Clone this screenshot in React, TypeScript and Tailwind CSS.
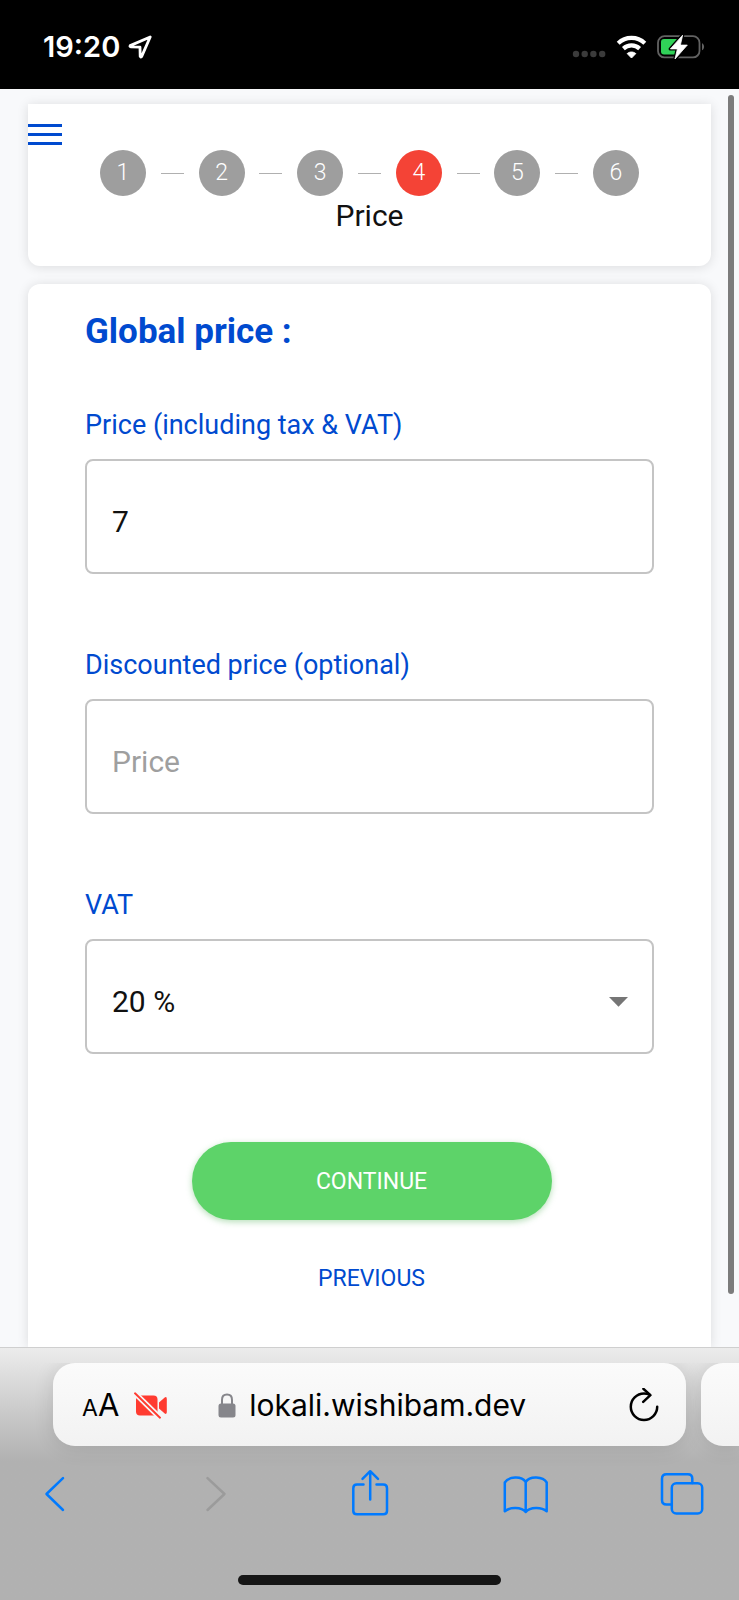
import { Fragment, useState, type ReactNode } from "react";

const STEPS = [1, 2, 3, 4, 5, 6];
const CURRENT_STEP = 4;
const VAT_RATES = ["20 %", "10 %", "5.5 %", "2.1 %"];

const fieldClass =
  "block h-[115px] w-full appearance-none rounded-lg border-2 border-[#c4c4c4] bg-transparent px-[25px] pt-[10px] text-[30px] text-[#111] outline-none placeholder:text-[#9f9f9f] placeholder:opacity-100";

function StatusBar() {
  return (
    <header className="flex h-[89px] items-center justify-between bg-black pr-[33px] pl-[43px] pt-[5px] font-[Inter,sans-serif] text-white">
      <div className="flex items-center gap-2">
        <span className="text-[29px] font-semibold">19:20</span>
        <svg width="24" height="24" viewBox="0 0 24 24" fill="none" stroke="white" strokeWidth="2.8" strokeLinejoin="round">
          <path d="M22.2 2 2.2 10.6Q1.6 11.8 2.8 11.9L12 12.2 12.2 21.4Q12.6 22.6 13.6 21.6Z" />
        </svg>
      </div>
      <div className="flex items-center gap-[10px]">
        <svg className="mt-[14px]" width="34" height="8" viewBox="0 0 34 8" fill="#3b3b3b">
          <circle cx="4" cy="4" r="3.2" />
          <circle cx="12.7" cy="4" r="3.2" />
          <circle cx="21.4" cy="4" r="3.2" />
          <circle cx="30.2" cy="4" r="3.2" />
        </svg>
        <svg width="31" height="24" viewBox="0 0 31 24">
          <path d="M2.2 8.2C9.6 1.1 21.4 1.1 28.8 8.2" fill="none" stroke="white" strokeWidth="4.2" />
          <path d="M7.4 13.6C12 9.4 19 9.4 23.6 13.6" fill="none" stroke="white" strokeWidth="4.2" />
          <path d="M15.5 23 11.2 18.6C13.6 16.5 17.4 16.5 19.8 18.6Z" fill="white" stroke="white" strokeLinejoin="round" />
        </svg>
        <svg width="49" height="26" viewBox="0 0 49 26">
          <rect x="1" y="2.2" width="41.5" height="21.2" rx="6.5" fill="none" stroke="#626262" strokeWidth="1.8" />
          <path d="M45 9.2C47.8 10.4 47.8 15 45 16.2Z" fill="#626262" />
          <path d="M7 5H22V20.6H7Q4 20.6 4 17.6V8Q4 5 7 5Z" fill="#30d158" />
          <path d="M25.6 1.2 13.4 14.9H20.4L18 25 30.3 11.1H23.4Z" fill="white" stroke="black" strokeWidth="3.4" strokeLinejoin="round" />
          <path d="M25.6 1.2 13.4 14.9H20.4L18 25 30.3 11.1H23.4Z" fill="white" stroke="white" strokeWidth="0.8" strokeLinejoin="round" />
        </svg>
      </div>
    </header>
  );
}

function Stepper() {
  return (
    <section className="relative rounded-b-xl bg-white px-[72px] pt-[46px] pb-[30px] shadow-[0_1px_12px_rgba(0,0,0,0.12)]">
      <button type="button" aria-label="Menu" className="absolute top-5 left-0 flex w-[34px] flex-col gap-[6px]">
        <span className="h-[3px] w-full bg-[#004acf]" />
        <span className="h-[3px] w-full bg-[#004acf]" />
        <span className="h-[3px] w-full bg-[#004acf]" />
      </button>
      <ol className="flex items-center justify-between">
        {STEPS.map((step) => (
          <Fragment key={step}>
            {step > 1 ? <li aria-hidden="true" className="h-px w-[23px] bg-[#b0b0b0]" /> : null}
            <li
              className={`flex size-[46px] items-center justify-center rounded-full text-[23px] font-light text-white ${
                step === CURRENT_STEP ? "bg-[#f44336]" : "bg-[#9e9e9e]"
              }`}
            >
              {step}
            </li>
          </Fragment>
        ))}
      </ol>
      <p className="text-center text-[30px] leading-10 text-[#111]">Price</p>
    </section>
  );
}

function Field({ id, label, children }: { id: string; label: string; children: ReactNode }) {
  return (
    <div className="mb-[75px]">
      <label htmlFor={id} className="mb-[17px] block text-[27px] leading-[33px] text-[#004acf]">
        {label}
      </label>
      {children}
    </div>
  );
}

function PriceForm() {
  const [price, setPrice] = useState("7");
  const [discount, setDiscount] = useState("");
  const [vat, setVat] = useState("20 %");

  return (
    <form
      className="flex-1 rounded-t-xl bg-white px-[57px] pt-7 shadow-[0_1px_12px_rgba(0,0,0,0.12)]"
      onSubmit={(event) => event.preventDefault()}
    >
      <h1 className="mb-[57px] text-[35px] leading-10 font-bold text-[#004acf]">Global price :</h1>

      <Field id="price" label="Price (including tax & VAT)">
        <input id="price" inputMode="decimal" className={fieldClass} value={price} onChange={(e) => setPrice(e.target.value)} />
      </Field>
      <Field id="discount" label="Discounted price (optional)">
        <input
          id="discount"
          inputMode="decimal"
          placeholder="Price"
          className={fieldClass}
          value={discount}
          onChange={(e) => setDiscount(e.target.value)}
        />
      </Field>
      <Field id="vat" label="VAT">
        <div className="relative">
          <select id="vat" className={fieldClass} value={vat} onChange={(e) => setVat(e.target.value)}>
            {VAT_RATES.map((rate) => (
              <option key={rate}>{rate}</option>
            ))}
          </select>
          <svg className="pointer-events-none absolute top-[58px] right-[26px]" width="19" height="10" viewBox="0 0 19 10">
            <path d="M0 0H19L9.5 9.7Z" fill="#757575" />
          </svg>
        </div>
      </Field>

      <div className="mt-[88px] flex flex-col items-center gap-[34px] pl-1">
        <button
          type="submit"
          className="h-[78px] w-[360px] rounded-full bg-[#5dd369] pt-[3px] text-[23px] text-white shadow-[0_2px_6px_rgba(76,175,80,0.4)]"
        >
          CONTINUE
        </button>
        <button type="button" className="h-12 px-6 pt-[3px] text-[23px] text-[#004acf]">
          PREVIOUS
        </button>
      </div>
    </form>
  );
}

function ToolbarButton({ label, disabled, children }: { label: string; disabled?: boolean; children: ReactNode }) {
  return (
    <button type="button" aria-label={label} disabled={disabled} className="text-[#007aff] disabled:text-[#9b9b9b]">
      <svg
        width="48"
        height="48"
        viewBox="0 0 48 48"
        fill="none"
        stroke="currentColor"
        strokeWidth="2.5"
        strokeLinecap="round"
        strokeLinejoin="round"
      >
        {children}
      </svg>
    </button>
  );
}

function BrowserBar() {
  return (
    <footer className="relative border-t border-[#cfcfcf] bg-linear-to-b from-[#ececec] via-[#c4c4c4] via-30% to-[#b1b1b1] to-45% pt-[15px] font-[Inter,sans-serif]">
      <div className="flex gap-[15px] overflow-hidden pb-[23px] pl-[53px]">
        <div className="flex h-[83px] flex-1 items-center rounded-[22px] bg-linear-to-b from-[#fbfbfb] to-[#f2f2f2] pt-[2px] pr-[26px] pl-[29px] text-black shadow-[0_2px_20px_rgba(0,0,0,0.12)]">
          <button type="button" aria-label="Page settings" className="flex items-baseline">
            <span className="text-[23px]">A</span>
            <span className="text-[31px]">A</span>
          </button>
          <svg className="ml-[15px] shrink-0" width="34" height="28" viewBox="0 0 34 28" fill="#ff3b30">
            <rect x="2" y="3.5" width="21.5" height="20" rx="4" />
            <path d="M25 10.5 30.4 5.7Q32.8 4.1 32.8 6.9V20.1Q32.8 22.9 30.4 21.3L25 16.5Z" />
            <path d="M1 1.3 26 25.7" stroke="#f7f7f7" strokeWidth="5.4" />
            <path d="M1 1.3 26 25.7" stroke="#ff3b30" strokeWidth="1.9" strokeLinecap="round" />
          </svg>
          <svg className="ml-[50px] shrink-0" width="18" height="26" viewBox="0 0 18 26">
            <rect x="0.5" y="10.5" width="17" height="14" rx="2.5" fill="#86868b" />
            <path d="M4 11.5V6.9Q4 1.5 9 1.5T14 6.9V11.5" fill="none" stroke="#86868b" strokeWidth="2" />
          </svg>
          <span className="ml-[13px] flex-1 text-[30px] whitespace-nowrap">lokali.wishibam.dev</span>
          <button type="button" aria-label="Reload">
            <svg width="32" height="36" viewBox="0 0 32 36" fill="none" stroke="black" strokeWidth="2.5" strokeLinecap="round" strokeLinejoin="round">
              <path d="M29.2 18.7A13.2 13.2 0 1 1 16 5.5Q19 5.5 21.5 6.6" />
              <path d="M15.4 0.8 22.4 7.2 15.2 13.8" />
            </svg>
          </button>
        </div>
        <div className="h-[83px] w-[38px] rounded-l-[22px] bg-linear-to-b from-[#fbfbfb] to-[#f2f2f2] shadow-[0_2px_20px_rgba(0,0,0,0.12)]" />
      </div>

      <nav className="flex justify-between pr-[33px] pl-[30px]">
        <ToolbarButton label="Back">
          <path d="M33 9.2 16.5 25 33 41" />
        </ToolbarButton>
        <ToolbarButton label="Forward" disabled>
          <path d="M20.5 9.2 37.5 25 20.5 41" />
        </ToolbarButton>
        <ToolbarButton label="Share">
          <path d="M19.5 15.5H13Q9.3 15.5 9.3 19.2V42Q9.3 45.3 13 45.3H39.3Q43 45.3 43 42V19.2Q43 15.5 39.3 15.5H32.5" />
          <path d="M26.2 30.5V2.8M18.5 9.8 26.2 2.2 34 9.8" />
        </ToolbarButton>
        <ToolbarButton label="Bookmarks">
          <path d="M24.7 13V43C20.5 37.8 9 37.8 3.8 42.3V13.5C7.5 7.5 20.5 6.5 24.7 13ZM24.7 13C29 6.5 42 7.5 45.7 13.5V42.3C40.5 37.8 29 37.8 24.7 43" />
        </ToolbarButton>
        <ToolbarButton label="Tabs">
          <rect x="13.8" y="14.2" width="30.4" height="30.2" rx="4.5" />
          <path d="M13.8 35.5H8.5Q4 35.5 4 31V9.7Q4 5.2 8.5 5.2H29.8Q34.3 5.2 34.3 9.7V14" />
        </ToolbarButton>
      </nav>

      <div className="mx-auto mt-[58px] mb-[15px] h-[10px] w-[263px] rounded-full bg-[#161616]" />
    </footer>
  );
}

export default function App() {
  return (
    <div className="flex min-h-screen flex-col bg-[#f8f9fb] font-[Roboto,sans-serif]">
      <StatusBar />
      <main className="relative flex flex-1 flex-col gap-[18px] px-7 pt-[15px]">
        <Stepper />
        <PriceForm />
        <div className="absolute top-[6px] right-[5px] bottom-[53px] w-[6px] rounded-full bg-[#7c7c7c]" />
      </main>
      <BrowserBar />
    </div>
  );
}
